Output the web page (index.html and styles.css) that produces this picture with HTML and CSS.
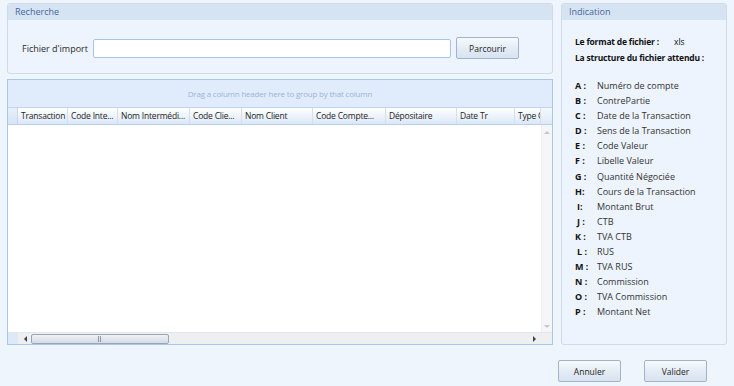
FILE: index.html
```html
<!DOCTYPE html>
<html lang="fr">
<head>
    <meta charset="UTF-8">
    <title>Import des transactions</title>
    <link rel="stylesheet" href="styles.css">
</head>
<body>
    <div class="page">
        <div class="left">
            <div class="group search">
                <div class="group-title">Recherche</div>
                <div class="search-row">
                    <label class="field-label">Fichier d'import</label>
                    <input class="field" type="text">
                    <button class="btn btn-browse">Parcourir</button>
                </div>
            </div>

            <div class="grid">
                <div class="group-panel">Drag a column header here to group by that column</div>
                <div class="grid-head">
                    <div class="indicator"></div>
                    <div class="col" style="width:50px">Transaction</div>
                    <div class="col" style="width:50px">Code Inte...</div>
                    <div class="col" style="width:72px">Nom Intermédi...</div>
                    <div class="col" style="width:52px">Code Clie...</div>
                    <div class="col" style="width:71px">Nom Client</div>
                    <div class="col" style="width:73px">Code Compte...</div>
                    <div class="col" style="width:71px">Dépositaire</div>
                    <div class="col" style="width:58px">Date Tr</div>
                    <div class="col last">Type C</div>
                    <div class="head-corner"></div>
                </div>
                <div class="grid-body">
                    <div class="rows"></div>
                    <div class="vscroll">
                        <span class="arrow up"></span>
                        <span class="arrow down"></span>
                    </div>
                </div>
                <div class="hscroll">
                    <div class="hs-corner"></div>
                    <span class="arrow left"></span>
                    <div class="thumb"><span class="grip"></span></div>
                    <div class="hs-track"></div>
                    <span class="arrow right"></span>
                </div>
            </div>
        </div>

        <div class="group info">
            <div class="group-title">Indication</div>
            <div class="info-body">
                <div class="info-line"><b>Le format de fichier :</b><span class="fmt">xls</span></div>
                <div class="info-line"><b>La structure du fichier attendu :</b></div>
                <ul class="cols-list">
                    <li><b>A :</b><span>Numéro de compte</span></li>
                    <li><b>B :</b><span>ContrePartie</span></li>
                    <li><b>C :</b><span>Date de la Transaction</span></li>
                    <li><b>D :</b><span>Sens de la Transaction</span></li>
                    <li><b>E :</b><span>Code Valeur</span></li>
                    <li><b>F :</b><span>Libelle Valeur</span></li>
                    <li><b>G :</b><span>Quantité Négociée</span></li>
                    <li><b>H:</b><span>Cours de la Transaction</span></li>
                    <li><b class="ind">I:</b><span>Montant Brut</span></li>
                    <li><b class="ind">J :</b><span>CTB</span></li>
                    <li><b>K :</b><span>TVA CTB</span></li>
                    <li><b class="ind">L :</b><span>RUS</span></li>
                    <li><b>M :</b><span>TVA RUS</span></li>
                    <li><b>N :</b><span>Commission</span></li>
                    <li><b>O :</b><span>TVA Commission</span></li>
                    <li><b>P :</b><span>Montant Net</span></li>
                </ul>
            </div>
        </div>
    </div>

    <div class="actions">
        <button class="btn btn-action">Annuler</button>
        <button class="btn btn-action">Valider</button>
    </div>
</body>
</html>
```

FILE: styles.css
```css
* {
    margin: 0;
    padding: 0;
    box-sizing: border-box;
}

body {
    width: 734px;
    height: 386px;
    background-color: #eef5fd;
    font-family: "Open Sans", "Noto Sans", sans-serif;
    font-size: 9px;
    color: #1e1e1e;
    overflow: hidden;
}

.page {
    display: flex;
    gap: 8px;
    padding: 3px 0 0 7px;
}

.left {
    width: 546px;
    display: flex;
    flex-direction: column;
    gap: 5px;
}

/* group boxes */
.group {
    background-color: #edf4fd;
    border: 1px solid #cddbeb;
    border-radius: 3px;
}

.group-title {
    height: 16px;
    line-height: 15px;
    padding-left: 7px;
    background-color: #d6e3f3;
    color: #46679c;
    font-size: 9px;
}

.search {
    height: 71px;
}

.search-row {
    display: flex;
    align-items: center;
    padding: 17px 0 0 14px;
}

.field-label {
    width: 71px;
    color: #2a2a2a;
}

.field {
    width: 358px;
    height: 19px;
    border: 1px solid #a9c4e6;
    border-radius: 2px;
    background: #fff;
}

.btn {
    font-family: inherit;
    font-size: 8.5px;
    color: #1e1e1e;
    border: 1px solid #9fb4cf;
    border-radius: 2px;
    background: linear-gradient(#f7fafd, #e3ebf5 55%, #d8e3f0);
}

.btn-browse {
    width: 63px;
    height: 22px;
    margin-left: 5px;
}

/* data grid */
.grid {
    height: 266px;
    border: 1px solid #a9c6ec;
    background-color: #fff;
    display: flex;
    flex-direction: column;
}

.group-panel {
    height: 28px;
    line-height: 27px;
    text-align: center;
    background-color: #e0ecfb;
    border-bottom: 1px solid #c3d6ef;
    color: #9db3d7;
    font-size: 8px;
    letter-spacing: -0.2px;
}

.grid-head {
    height: 17px;
    display: flex;
    background: linear-gradient(#ffffff, #e9f1fb 60%, #dbe7f6);
    border-bottom: 1px solid #b9cfeb;
}

.indicator {
    width: 10px;
    background: linear-gradient(#e8f0fa, #d6e4f5);
    border-right: 1px solid #c5d7ee;
}

.col {
    padding-left: 3px;
    line-height: 16px;
    font-size: 8.5px;
    letter-spacing: -0.2px;
    white-space: nowrap;
    overflow: hidden;
    border-right: 1px solid #d3e0f0;
    color: #1e1e1e;
}

.col.last {
    width: 26px;
}

.head-corner {
    flex: 1;
    background: linear-gradient(#f4f8fd, #dfe9f6);
}

.grid-body {
    flex: 1;
    display: flex;
}

.rows {
    flex: 1;
}

.vscroll {
    width: 11px;
    background-color: #f5f6f7;
    border-left: 1px solid #eceef0;
    display: flex;
    flex-direction: column;
    justify-content: space-between;
    align-items: center;
    padding: 6px 0 4px;
}

.arrow {
    width: 0;
    height: 0;
    border: 3px solid transparent;
}

.arrow.up {
    border-bottom-color: #c3c7cc;
    border-top-width: 0;
}

.arrow.down {
    border-top-color: #c3c7cc;
    border-bottom-width: 0;
}

.hscroll {
    height: 12px;
    display: flex;
    align-items: center;
    background-color: #eeeff1;
    border-top: 1px solid #e4e6e9;
}

.hs-corner {
    width: 10px;
    height: 100%;
    background-color: #dde9f8;
}

.arrow.left {
    border-right-color: #3c4350;
    border-left-width: 0;
    margin: 0 4px 0 6px;
}

.arrow.right {
    border-left-color: #3c4350;
    border-right-width: 0;
    margin-right: 16px;
}

.thumb {
    width: 138px;
    height: 10px;
    border: 1px solid #9aa6b8;
    border-radius: 2px;
    background: linear-gradient(#eef1f5, #d5dbe4);
    display: flex;
    justify-content: center;
    align-items: center;
}

.grip {
    width: 4px;
    height: 6px;
    background: repeating-linear-gradient(90deg, #8d97a6 0 1px, transparent 1px 2px);
}

.hs-track {
    flex: 1;
}

/* indication */
.info {
    width: 166px;
    height: 342px;
}

.info-body {
    padding: 14px 0 0 13px;
}

.info-line {
    height: 16px;
    line-height: 16px;
    font-size: 8.5px;
    letter-spacing: -0.2px;
    color: #111;
}

.info-line b {
    font-weight: 700;
}

.fmt {
    margin-left: 15px;
    letter-spacing: 0;
}

.cols-list {
    list-style: none;
    margin-top: 12px;
}

.cols-list li {
    display: flex;
    height: 15.1px;
    line-height: 15px;
}

.cols-list b {
    width: 22px;
    font-weight: 700;
    color: #111;
}

.cols-list b.ind {
    padding-left: 2px;
}

.cols-list span {
    color: #333;
}

.actions {
    display: flex;
    justify-content: flex-end;
    gap: 23px;
    padding: 15px 27px 0 0;
}

.btn-action {
    width: 63px;
    height: 22px;
}
```
